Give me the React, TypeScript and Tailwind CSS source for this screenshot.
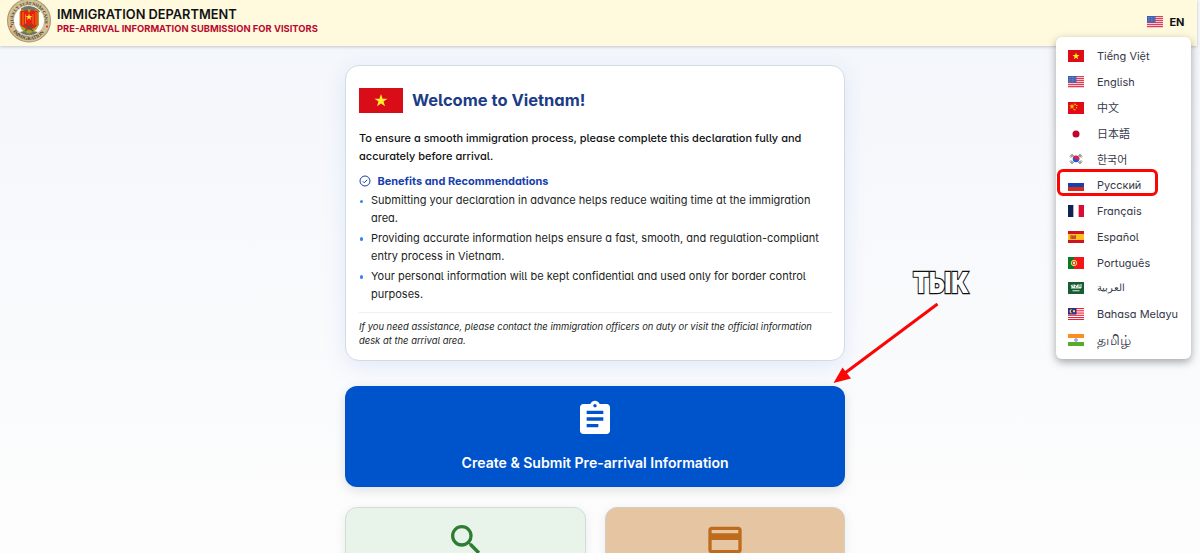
import { MdAssignment, MdCreditCard, MdSearch } from 'react-icons/md'
import type { ReactNode } from 'react'

const STAR = '0,-10 2.3,-3.1 9.5,-3.1 3.7,1.2 5.9,8.1 0,3.8 -5.9,8.1 -3.7,1.2 -9.5,-3.1 -2.3,-3.1'

function Flag({ children }: { children: ReactNode }) {
  return (
    <svg viewBox="0 0 32 24" className="h-3 w-4 shrink-0">
      {children}
    </svg>
  )
}

function UsFlag() {
  return (
    <Flag>
      <rect width="32" height="24" fill="#f7d7df" />
      {[0, 4, 8, 12, 16, 20].map((y) => (
        <rect key={y} y={y} width="32" height="2.2" fill="#dc4058" />
      ))}
      <rect width="17" height="13" fill="#3f5fae" />
      <path d="M2 3h13M2 6.500h13M2 10h13" stroke="#b9c7e8" strokeWidth="1" strokeDasharray="1.500 1.500" />
    </Flag>
  )
}

const languages = [
  {
    name: 'Tiếng Việt',
    flag: (
      <Flag>
        <rect width="32" height="24" fill="#dc0d17" />
        <polygon points={STAR} transform="translate(16 12.500) scale(.75)" fill="#ffee21" />
      </Flag>
    ),
  },
  { name: 'English', flag: <UsFlag /> },
  {
    name: '中文',
    flag: (
      <Flag>
        <rect width="32" height="24" fill="#e30a17" />
        <polygon points={STAR} transform="translate(8 9) scale(.6)" fill="#ffc400" />
        <path d="M12 4l4 1M16 7h3M16 12l2-1M11 15l4 1" stroke="#ffc400" strokeWidth="2.400" />
      </Flag>
    ),
  },
  {
    name: '日本語',
    flag: (
      <Flag>
        <rect width="32" height="24" fill="#fff" />
        <circle cx="16" cy="12" r="7" fill="#c0042c" />
      </Flag>
    ),
  },
  {
    name: '한국어',
    flag: (
      <Flag>
        <rect width="32" height="24" fill="#fff" />
        <circle cx="16" cy="12" r="6.500" fill="#1f55e4" />
        <path d="M9.600 10a6.500 6.500 0 0 1 12.800 4c-3 1-4-1-6-2s-4 0-6.400-2z" fill="#e0203c" />
        <path d="M4 7l5-5M6 9l5-5M23 2l5 5M21 4l5 5M4 17l5 5M6 15l5 5M23 22l5-5M21 20l5-5" stroke="#333" strokeWidth="1.800" />
      </Flag>
    ),
  },
  {
    name: 'Русский',
    flag: (
      <Flag>
        <rect width="32" height="24" fill="#fff" />
        <rect y="8" width="32" height="8" fill="#1541ae" />
        <rect y="16" width="32" height="8" fill="#d52b1e" />
      </Flag>
    ),
  },
  {
    name: 'Français',
    flag: (
      <Flag>
        <rect width="32" height="24" fill="#fff" />
        <rect width="10.700" height="24" fill="#0c2457" />
        <rect x="21.300" width="10.700" height="24" fill="#d80f32" />
      </Flag>
    ),
  },
  {
    name: 'Español',
    flag: (
      <Flag>
        <rect width="32" height="24" fill="#ca1620" />
        <rect y="6" width="32" height="12" fill="#ffbd20" />
        <path d="M5 8h11v8H5z" fill="#d48a3c" />
        <path d="M6 8v8M15 8v8M8 11h5v4H8z" stroke="#b83a28" strokeWidth="1.500" fill="#c8503a" />
      </Flag>
    ),
  },
  {
    name: 'Português',
    flag: (
      <Flag>
        <rect width="32" height="24" fill="#f2151c" />
        <rect width="12" height="24" fill="#0a7a2a" />
        <circle cx="12" cy="12" r="5.500" fill="#e8313a" stroke="#f5e12b" strokeWidth="2" />
        <rect x="10" y="9.500" width="4" height="5" fill="#e6e8f4" />
      </Flag>
    ),
  },
  {
    name: 'العربية',
    className: 'text-[9.500px]',
    flag: (
      <Flag>
        <rect width="32" height="24" fill="#165d31" />
        <path d="M6 6l3 5M10 5v6h3V5M15 6l3 5 2-6M22 5v6h4V4M6 12h20" stroke="#e6f0e8" strokeWidth="2.200" fill="none" />
        <path d="M9 17.500h14" stroke="#e6f0e8" strokeWidth="2" />
      </Flag>
    ),
  },
  {
    name: 'Bahasa Melayu',
    flag: (
      <Flag>
        <rect width="32" height="24" fill="#fff" />
        {[0, 4.5, 9, 13.5, 18, 22].map((y) => (
          <rect key={y} y={y} width="32" height="2.2" fill="#ed2038" />
        ))}
        <rect width="17" height="13" fill="#2c2c96" />
        <path d="M9 3a4 4 0 1 0 0 7 3.500 3.500 0 1 1 0-7z" fill="#ffe020" />
        <circle cx="12" cy="6.500" r="2.300" fill="#ffe020" />
      </Flag>
    ),
  },
  {
    name: 'தமிழ்',
    className: 'text-[13.500px] font-medium',
    flag: (
      <Flag>
        <rect width="32" height="24" fill="#fff" />
        <rect width="32" height="8" fill="#ff8c1f" />
        <rect y="16" width="32" height="8" fill="#5cab28" />
        <circle cx="16" cy="12" r="3" fill="#a9b5ee" stroke="#6479dc" strokeWidth="1" />
      </Flag>
    ),
  },
]

const benefits = [
  ['Submitting your declaration in advance helps reduce waiting time at the immigration', 'area.'],
  ['Providing accurate information helps ensure a fast, smooth, and regulation-compliant', 'entry process in Vietnam.'],
  ['Your personal information will be kept confidential and used only for border control', 'purposes.'],
]

function Emblem() {
  return (
    <svg viewBox="0 0 44 46" className="-mt-0.5 h-[46px] w-11 shrink-0">
      <circle cx="22" cy="22.500" r="22" fill="#a8946e" />
      <circle cx="22" cy="22.500" r="21" fill="#d3bf94" />
      <circle cx="22" cy="22.500" r="15" fill="#fff" />
      <path d="M14 10.500a14 14 0 0 1 19 3l-3 3H14zM13 34l8-2 10 2a14 14 0 0 1-18 0z" fill="#70736a" />
      <path d="M12.500 14l3-3 3 2 3.500-2 4 2 3-2 3 3v13l-3 5-7 4-7-4-2.500-5z" fill="#a4a52b" />
      <path d="M13.500 13l7-1 1.500 3 2-3 6.500 1v14l-3 3-5 2-5-2-4-3z" fill="#e6210f" />
      <path d="M16 14v13M18.500 16v11M26 16v11M29 14v13" stroke="#f8861c" strokeWidth=".9" />
      <polygon points={STAR} transform="translate(22 19) scale(.36)" fill="#ffe031" />
      <path d="M18 26l8 7M26 26l-8 7" stroke="#5d5545" strokeWidth="1.500" />
      <path id="ringTop" d="M7 27.500a15.800 15.800 0 1 1 30 0" fill="none" />
      <path id="ringBottom" d="M4.500 31a19.500 19.500 0 0 0 35 0" fill="none" />
      <text className="font-['Liberation_Serif',serif] text-[4.300px] font-bold" fill="#453f30">
        <textPath href="#ringTop" startOffset="1" textLength="56">
          QUẢN LÝ XUẤT NHẬP CẢNH
        </textPath>
      </text>
      <text className="font-['Liberation_Serif',serif] text-[5px] font-bold" fill="#453f30">
        <textPath href="#ringBottom" startOffset="3" textLength="36">
          IMMIGRATION
        </textPath>
      </text>
      <circle cx="4" cy="28.500" r="1" fill="#d62421" />
      <circle cx="40" cy="28.500" r="1" fill="#d62421" />
    </svg>
  )
}

export default function App() {
  return (
    <div className="relative h-[553px] w-full overflow-hidden bg-linear-to-b from-[#f3f6fb] to-[#fdfdfd] font-['Inter','Noto_Sans_CJK_SC',sans-serif] text-[#101214]">
      <header className="flex h-[46px] w-[1197px] items-start bg-[#fff9de] pl-[7px] shadow-[0_1px_3px_rgba(0,0,0,0.2)]">
        <Emblem />
        <div className="ml-1.5 pt-2 whitespace-nowrap">
          <h1 className="text-[12.800px] leading-[14px] font-semibold">IMMIGRATION DEPARTMENT</h1>
          <h2 className="text-[9.400px] leading-[13px] font-bold text-[#b8092f]">PRE-ARRIVAL INFORMATION SUBMISSION FOR VISITORS</h2>
        </div>
        <div className="mt-[15px] mr-[12.500px] ml-auto flex items-center gap-1.5">
          <UsFlag />
          <span className="pt-px text-[11px] leading-[13px] font-bold">EN</span>
        </div>
      </header>

      <main className="ml-[345.400px] w-[500px] pt-[19px]">
        <section className="h-[296px] rounded-[14px] border border-[#d5dbe3] bg-white px-[12.600px] pt-[21.500px] whitespace-nowrap shadow-[0_6px_22px_rgba(60,110,220,0.12)] [font-feature-settings:'cv11','cv05']">
          <div className="flex h-[25px] items-center gap-[9px]">
            <svg viewBox="0 0 44 25" className="h-[25px] w-11 shrink-0">
              <rect width="44" height="25" fill="#d90d17" />
              <polygon points={STAR} transform="translate(22 12.800) scale(.68)" fill="#ffec2e" />
            </svg>
            <h2 className="text-[16.500px] font-bold text-[#1c3c87]">Welcome to Vietnam!</h2>
          </div>
          <p className="mt-4 text-[11px] leading-[18.500px] font-medium">
            To ensure a smooth immigration process, please complete this declaration fully and
            <br />
            accurately before arrival.
          </p>
          <div className="mt-1.5 flex h-[18px] items-center gap-[6.500px] text-[#173eae]">
            <svg viewBox="0 0 24 24" className="h-3 w-3" fill="none" stroke="currentColor" strokeWidth="2">
              <circle cx="12" cy="12" r="10" />
              <path d="M7.500 12.500l3 3 6-6" />
            </svg>
            <h3 className="pt-px text-[10.960px] font-bold">Benefits and Recommendations</h3>
          </div>
          <ul className="mt-[1.500px] space-y-[1.800px] text-[11px] leading-[18px] text-[#1b1e23]">
            {benefits.map(([first, second]) => (
              <li key={first} className="flex">
                <span className="mt-[8.500px] mr-[7.500px] ml-[1px] h-[3.500px] w-[3.500px] shrink-0 rounded-full bg-[#3b82f6]" />
                <p>
                  {first}
                  <br />
                  {second}
                </p>
              </li>
            ))}
          </ul>
          <p className="mt-[9px] border-t border-[#eef0f3] pt-[7px] text-[9.420px] leading-[14px] text-[#1b1e23] italic">
            If you need assistance, please contact the immigration officers on duty or visit the official information
            <br />
            desk at the arrival area.
          </p>
        </section>

        <button className="mt-[25.400px] flex h-[101px] w-[499.500px] flex-col items-center rounded-[12px] bg-[#0054cb] pt-[12.600px] text-white shadow-[0_3px_12px_rgba(0,0,0,0.12)]">
          <MdAssignment size={40} />
          <span className="mt-3.5 text-[14.050px] leading-[20px] font-semibold whitespace-nowrap">Create &amp; Submit Pre-arrival Information</span>
        </button>

        <div className="mt-[19.600px] grid grid-cols-2 gap-[19px]">
          <div className="flex h-[101px] justify-center rounded-[12px] border border-[#d2dcdb] bg-[#e8f4ea] pt-3 shadow-[0_3px_12px_rgba(0,0,0,0.08)]">
            <MdSearch size={40} color="#2e7d32" />
          </div>
          <div className="flex h-[101px] justify-center rounded-[12px] border border-[#d4cdc6] bg-[#e6c5a2] pt-3 shadow-[0_3px_12px_rgba(0,0,0,0.08)]">
            <MdCreditCard size={40} color="#bf6b1d" />
          </div>
        </div>
      </main>

      {/* language menu */}
      <div className="absolute top-[37px] left-[1056px] h-[322px] w-[135px] rounded-md bg-white pt-[6.300px] shadow-[0_3px_9px_rgba(0,0,0,0.35)] [font-feature-settings:'cv11','cv05']">
        {languages.map((lang) => (
          <div key={lang.name} className="flex h-[25.800px] items-center gap-[13px] pl-3 text-[10.960px] whitespace-nowrap text-[#353849]">
            {lang.flag}
            <span className={lang.className ?? 'pt-px'}>{lang.name}</span>
          </div>
        ))}
      </div>

      {/* annotations */}
      <div className="absolute top-[168.500px] left-[1057px] h-[27px] w-[101px] rounded-md border-[3px] border-[#fb0505]" />
      <svg viewBox="0 0 180 150" className="absolute top-[250px] left-[820px] h-[150px] w-[180px]">
        <path d="M117.500 54L25 123" stroke="#fb0505" strokeWidth="3" />
        <path d="M13.500 133l9-15.500 8.500 11z" fill="#fb0505" />
        <text
          x="93"
          y="42.500"
          textLength="56"
          lengthAdjust="spacingAndGlyphs"
          fill="#fff"
          stroke="#111"
          strokeWidth="2.400"
          paintOrder="stroke"
          className="font-['Inter',sans-serif] text-[29px] font-black"
        >
          ТЫК
        </text>
      </svg>
    </div>
  )
}
